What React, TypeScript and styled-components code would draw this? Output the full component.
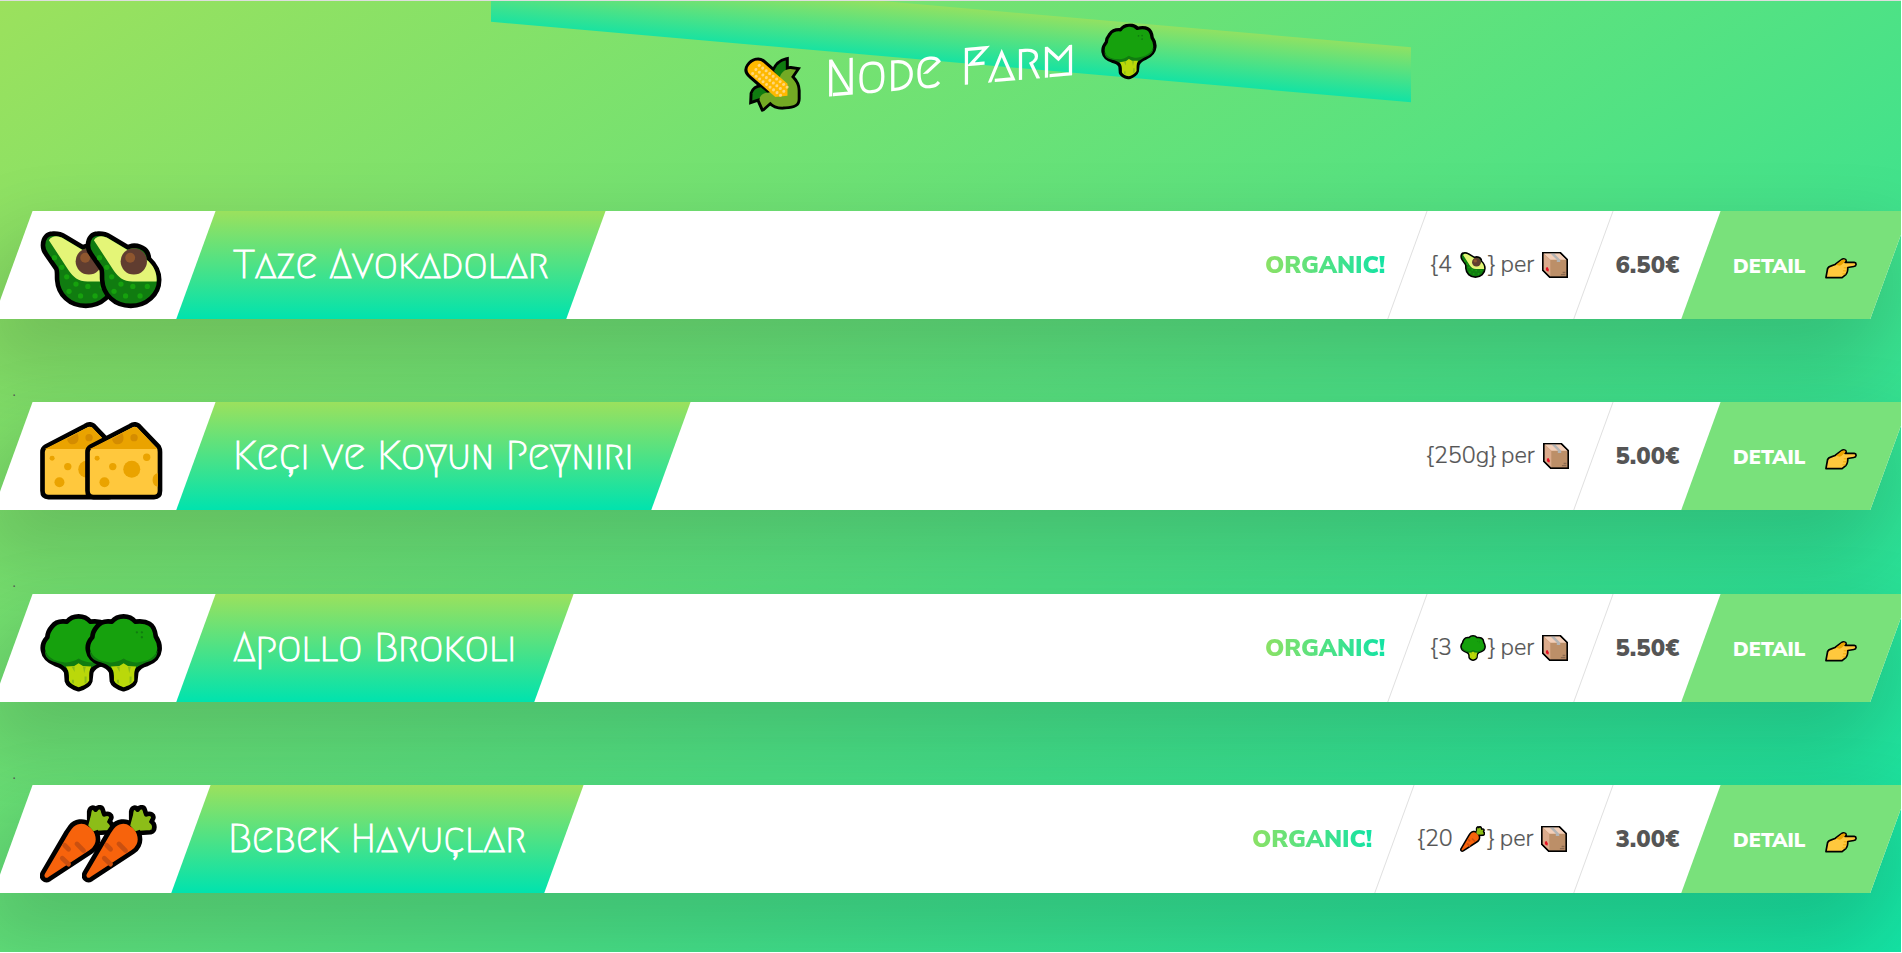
import React from "react";
import styled, { createGlobalStyle } from "styled-components";

const GlobalStyle = createGlobalStyle`
  *, *::before, *::after { box-sizing: border-box; margin: 0; padding: 0; }
  body { background: #fff; font-family: "Open Sans", "Noto Sans", sans-serif; color: #555; overflow: hidden; }
`;

const Page = styled.div`
  position: relative;
  width: 1901px;
  height: 952px;
  overflow: hidden;
  border-top: 1px solid #dedede;
  padding: 25px 11.5px 0 12.5px;
  background: linear-gradient(to bottom right, #9be15d, #00e3ae) 0 0 / 1902px 1270px no-repeat;
`;

const Header = styled.header`
  position: relative;
  height: 85px;
  margin-bottom: 100px;
`;

const Band = styled.div`
  position: absolute;
  left: 478.5px;
  top: -19.5px;
  width: 919.5px;
  height: 55px;
  opacity: 0.8;
  transform: skewY(5deg);
  background: linear-gradient(to bottom, #9be15d, #00e3ae);
`;

const Heading = styled.h1`
  position: relative;
  display: flex;
  align-items: center;
  justify-content: center;
  gap: 24px;
  height: 85px;
  padding-right: 2px;
  transform: skewY(-5deg);
  color: #fff;
  > svg { margin-bottom: 3px; }
`;

const HeadingText = styled.span`
  width: 252px;
  font: 400 50px/85px Megrim, Lato, sans-serif;
  -webkit-text-stroke: 1.7px #fff;
  word-spacing: 3.75px;
  white-space: nowrap;
  margin-top: -1px;
`;

const Card = styled.figure`
  display: flex;
  height: 107.5px;
  background: #fff;
  box-shadow: 0 37.5px 75px 12.5px rgba(0, 0, 0, 0.15);
  transform: skewX(-20deg);
`;

const Separator = styled.p`
  height: 21.25px;
  margin-top: 62.5px;
  font-size: 12.5px;
  line-height: 21.25px;
`;

const EmojiBox = styled.div<{ $width: number; $overlap: number }>`
  display: flex;
  align-items: center;
  width: ${(p) => p.$width}px;
  padding: 10px 0 0 27px;
  transform: skewX(20deg);
  svg + svg { margin-left: ${(p) => p.$overlap}px; }
`;

const TitleBox = styled.div<{ $width: number }>`
  display: flex;
  align-items: center;
  width: ${(p) => p.$width}px;
  margin-right: auto;
  padding: 0 0 2px 37px;
  background: linear-gradient(to bottom, #9be15d, #00e3ae);
`;

const Title = styled.h2`
  color: #fff;
  font: 400 40.6px/50px Megrim, Lato, sans-serif;
  -webkit-text-stroke: 1.2px #fff;
  white-space: nowrap;
  transform: skewX(20deg);
`;

const DetailBox = styled.div<{ $width: number }>`
  display: flex;
  align-items: center;
  width: ${(p) => p.$width}px;
  padding-left: 21px;
  border-left: 1px solid #dfdfdf;
  &:first-of-type { border-left-color: transparent; }
`;

const Details = styled.div`
  display: flex;
`;

const Detail = styled.p`
  display: flex;
  align-items: center;
  font-family: "Nunito Sans", Nunito, "Open Sans", sans-serif;
  font-size: 23.3px;
  font-weight: 300;
  line-height: 42px;
  white-space: pre;
  transform: skewX(20deg);
  padding-bottom: 1px;
  padding-left: 1px;
  -webkit-text-stroke: 0.2px #555;
  svg { position: relative; top: 0.5px; }
`;

const Organic = styled(Detail)`
  font: 900 24px/42px "Nunito Sans", Lato, sans-serif;
  letter-spacing: -0.1px;
  -webkit-text-stroke: 0;
  padding: 0;
  text-transform: uppercase;
  background: linear-gradient(to right, #9be15d -12%, #00e3ae 115%);
  background-clip: text;
  -webkit-background-clip: text;
  color: transparent;
`;

const Price = styled(Detail)`
  font: 900 24px/42px "Nunito Sans", Lato, sans-serif;
  -webkit-text-stroke: 0;
  padding: 0 0 0 0.5px;
`;

const Quantity = styled.span<{ $icon?: boolean }>`
  display: flex;
  align-items: center;
  width: ${(p) => (p.$icon ? "auto" : "75px")};
`;

const Count = styled.span<{ $width: number }>`
  width: ${(p) => p.$width}px;
`;

const Closing = styled.span`
  width: 15px;
  padding-left: 2.5px;
`;

const Per = styled.span`
  width: 41.5px;
`;

const DetailLink = styled.a`
  display: flex;
  align-items: center;
  width: 189px;
  padding-left: 32px;
  background: #79e17b;
  color: #fff;
  font: 900 20px/34px "Nunito Sans", Lato, sans-serif;
  text-transform: uppercase;
`;

const LinkText = styled.span`
  display: flex;
  align-items: center;
  width: 124px;
  justify-content: space-between;
  transform: skewX(20deg);
  padding-top: 4px;
  svg { margin-top: 3px; }
`;

type IconProps = { size?: number };

function Avocado({ size = 77 }: IconProps) {
  const body =
    "M292 130C277 130 263 142 263 165C263 177 266 184 273 193L303 236C307 243 305 256 306 270C309 315 343 349 393 349C440 349 479 315 479 270C479 240 465 222 448 206C447 181 428 167 403 166C396 166 390 169 384 171L328 138C316 130 306 129 292 130Z";
  return (
    <svg width={size} height={size} viewBox="256 122 231 235" fill="none">
      <path d={body} fill="#107c10" stroke="#000" strokeWidth="14" strokeLinejoin="round" />
      <path d="M281 150C292 133 312 137 325 145L382 179L445 212C463 228 473 250 471 275H398C370 275 354 260 342 243Z" fill="#e4f577" />
      <circle cx="402" cy="214" r="40" fill="#603d30" />
      <circle cx="391" cy="203" r="15" fill="#8e562e" />
      <g fill="#16a10d">
        {[[298, 203], [320, 232], [335, 261], [363, 283], [399, 290], [443, 290], [342, 305], [377, 319], [421, 319]].map(([x, y]) => (
          <circle key={`${x}-${y}`} cx={x} cy={y} r="8" />
        ))}
      </g>
    </svg>
  );
}

function Cheese({ size = 77 }: IconProps) {
  return (
    <svg width={size} height={size} viewBox="0 0 232 233" fill="none">
      <path d="M7 90C7 82 11 77 18 73L135 12C148 4 158 6 166 17L221 74C224 79 225 83 225 90V207C225 219 219 226 207 226H25C13 226 7 219 7 207Z" fill="#ffc83d" stroke="#000" strokeWidth="14" strokeLinejoin="round" />
      <path d="M14 81L140 18C150 13 155 14 161 22L217 81Z" fill="#eaa300" />
      <g fill="#d48c00">
        <path d="M81 51L112 34C120 52 113 67 98 67C88 67 82 60 81 51Z" />
        <circle cx="147" cy="47" r="11" />
      </g>
      <g fill="#eaa300">
        <circle cx="36" cy="109" r="7.5" />
        <circle cx="83" cy="134" r="11" />
        <circle cx="140" cy="142" r="25.5" />
        <circle cx="185" cy="106" r="11" />
        <circle cx="58" cy="181" r="15" />
        <path d="M218 153A22 22 0 0 0 218 195Z" />
      </g>
    </svg>
  );
}

function Broccoli({ size = 77 }: IconProps) {
  return (
    <svg width={size} height={size} viewBox="0 0 231 233" fill="none">
      <path d="M115 7C98 7 88 13 80 23C62 20 44 25 35 38C26 48 22 58 21 70C10 82 5 95 8 110C11 128 26 142 45 150C60 154 72 160 78 175L80 202C84 216 100 222 115 226C130 222 146 216 150 202L153 175C160 158 172 153 186 150C206 142 221 128 223 108C225 90 220 80 212 68C210 50 205 36 193 29C180 21 165 21 150 23C142 13 132 7 115 7Z" fill="#16a10d" stroke="#000" strokeWidth="14" strokeLinejoin="round" />
      <path d="M14 108C20 128 42 142 66 144C84 148 98 144 115 134C132 144 146 148 164 144C188 142 212 128 217 108C218 130 204 140 184 145C172 150 162 155 155 160H76C68 153 58 149 46 145C24 140 12 128 14 108Z" fill="#107c10" />
      <path d="M77 158L102 156L115 148L128 156L153 158C148 168 147 175 147 184V200C141 211 128 216 115 220C102 216 91 210 86 200V184C86 174 83 168 77 158Z" fill="#bad80a" />
      <path d="M94 158H103V174ZM128 158H137L132 178ZM95 198H101V210L95 206ZM133 188H139V205L133 209Z" fill="#8cbd18" />
      <g fill="#107c10">
        <circle cx="155" cy="55" r="3.5" />
        <circle cx="170" cy="55" r="3.5" />
        <circle cx="170" cy="70" r="3.5" />
      </g>
    </svg>
  );
}

function Carrot({ size = 77 }: IconProps) {
  return (
    <svg width={size * 0.97} height={size} viewBox="0 0 226 233" fill="none">
      <path d="M148 61L148 20C150 5 162 5 167 14C174 4 187 4 189 16L193 28C207 23 217 30 214 40L209 50C220 57 222 77 206 82L162 85Z" fill="#8cbd18" stroke="#000" strokeWidth="14" strokeLinejoin="round" />
      <path d="M91 66C105 48 131 44 148 58C170 68 181 101 170 122C166 130 161 136 153 141L28 223C14 231 2 218 8 205L80 82Z" fill="#f7630c" stroke="#000" strokeWidth="14" strokeLinejoin="round" />
      <path d="M156 20L168 29L181 17L186 36L207 37L199 53L210 74H176L161 79L145 62Z" fill="#8cbd18" />
      <g stroke="#ca5010" strokeWidth="14" strokeLinecap="round">
        <path d="M111 117L131 137M74 121L86 133M67 160L86 178" />
      </g>
    </svg>
  );
}

function Corn() {
  const dots: number[][] = [];
  for (let i = 0; i < 9; i++) {
    for (let j = 0; j < 3; j++) {
      dots.push([27 + i * 10.6 + j * 10, 48 + i * 9.2 - j * 11.5]);
    }
  }
  const cob = "M15 24C8 34 12 45 22 54L96 125H133V88L61 19C47 4 26 8 15 24Z";
  const husk = "M110 65C114 52 127 42 142 44L159 48L144 69C156 82 164 94 164 112V137C164 152 155 157 126 157C104 157 92 151 81 138L59 156L48 130C48 115 60 109 78 110Z";
  const upper = "M92 46C101 28 111 19 128 17V48L108 68Z";
  const lower = "M26 130L27 108C32 96 42 92 52 92L74 112L49 124Z";
  return (
    <svg width="57" height="55" viewBox="2 -1 171 167" fill="none">
      <g stroke="#000" strokeWidth="18" fill="#000" strokeLinejoin="miter">
        <path d={upper} />
        <path d={lower} />
        <path d={cob} />
        <path d={husk} />
      </g>
      <path d={upper} fill="#107c10" />
      <path d={lower} fill="#107c10" />
      <path d={husk} fill="#73aa24" />
      <path d={cob} fill="#ffb900" />
      <g fill="#ffd679">
        {dots.map(([x, y], i) => (
          <circle key={i} cx={x} cy={y} r="4.6" />
        ))}
      </g>
    </svg>
  );
}

function Parcel() {
  return (
    <svg width="26" height="26" viewBox="0 0 76 76" fill="none">
      <path d="M2 2H53L74 23V74H23L2 53Z" fill="#bc8f68" stroke="#000" strokeWidth="5" />
      <path d="M4 4H52L72 23H24Z" fill="#f3cfb8" />
      <path d="M4 4L24 23V72L4 52Z" fill="#dbab8c" />
      <path d="M24 4H35L53 23V29H43V23Z" fill="#b4b4b4" />
      <path d="M11 46L16 44L20 52L18 58L11 53Z" fill="#e81224" />
      <path d="M60 58H68V62H60ZM55 64H68V68H55Z" fill="#8a6a50" />
      <path d="M2 2H53L74 23V74H23L2 53Z" stroke="#000" strokeWidth="4" />
    </svg>
  );
}

function Pointer() {
  return (
    <svg width="32" height="21" viewBox="0 0 95 62" fill="none">
      <path d="M3 58L8 31C10 27 13 25 17 24L30 19L49 5C54 1 64 2 63 9L60 13H87C95 14 94 24 86 25L68 28C68 36 66 45 62 49L51 58Z" fill="#ffc83d" stroke="#000" strokeWidth="5" strokeLinejoin="round" />
      <path d="M33 20L50 6C55 3 61 4 61 9L50 20L44 23Z" fill="#eaa300" />
      <path d="M56 29H66M54 38H64M52 47H61" stroke="#eaa300" strokeWidth="2.5" />
    </svg>
  );
}

type Product = {
  name: string;
  titleWidth: number;
  emojiWidth: number;
  overlap: number;
  Icon: (props: IconProps) => React.JSX.Element;
  organic: boolean;
  count: string;
  countWidth: number;
  perWidth: number;
  price: string;
};

const products: Product[] = [
  { name: "Taze Avokadolar", titleWidth: 390, emojiWidth: 182.5, overlap: -32.5, Icon: Avocado, organic: true, count: "{4", countWidth: 29.5, perWidth: 186, price: "6.50€" },
  { name: "Keçi ve Koyun Peyniri", titleWidth: 475, emojiWidth: 182.5, overlap: -32.5, Icon: Cheese, organic: false, count: "{250g}", countWidth: 0, perWidth: 190, price: "5.00€" },
  { name: "Apollo Brokoli", titleWidth: 358, emojiWidth: 182.5, overlap: -32.5, Icon: Broccoli, organic: true, count: "{3", countWidth: 29.5, perWidth: 186, price: "5.50€" },
  { name: "Bebek Havuçlar", titleWidth: 373, emojiWidth: 177.5, overlap: -33.5, Icon: Carrot, organic: true, count: "{20", countWidth: 42.5, perWidth: 199, price: "3.00€" },
];

function ProductCard({ product }: { product: Product }) {
  const { Icon } = product;
  return (
    <Card>
      <EmojiBox $width={product.emojiWidth} $overlap={product.overlap}>
        <Icon size={77.5} />
        <Icon size={77.5} />
      </EmojiBox>
      <TitleBox $width={product.titleWidth}>
        <Title>{product.name}</Title>
      </TitleBox>
      <Details>
        {product.organic && (
          <DetailBox $width={164}>
            <Organic>Organic!</Organic>
          </DetailBox>
        )}
        <DetailBox $width={product.perWidth}>
          <Detail>
            <Quantity $icon={product.organic}>
              {product.organic ? (
                <>
                  <Count $width={product.countWidth}>{product.count}</Count>
                  <Icon size={26} />
                  <Closing>{"}"}</Closing>
                </>
              ) : (
                product.count
              )}
            </Quantity>
            <Per>per</Per>
            <Parcel />
          </Detail>
        </DetailBox>
        <DetailBox $width={107.8}>
          <Price>{product.price}</Price>
        </DetailBox>
      </Details>
      <DetailLink>
        <LinkText>
          <span>Detail</span>
          <Pointer />
        </LinkText>
      </DetailLink>
    </Card>
  );
}

export default function App() {
  return (
    <>
      <GlobalStyle />
      <Page>
        <Header>
          <Band />
          <Heading>
            <Corn />
            <HeadingText>Node Farm</HeadingText>
            <Broccoli size={56} />
          </Heading>
        </Header>
        {products.map((product, index) => (
          <React.Fragment key={product.price}>
            {index > 0 && <Separator>.</Separator>}
            <ProductCard product={product} />
          </React.Fragment>
        ))}
      </Page>
    </>
  );
}
